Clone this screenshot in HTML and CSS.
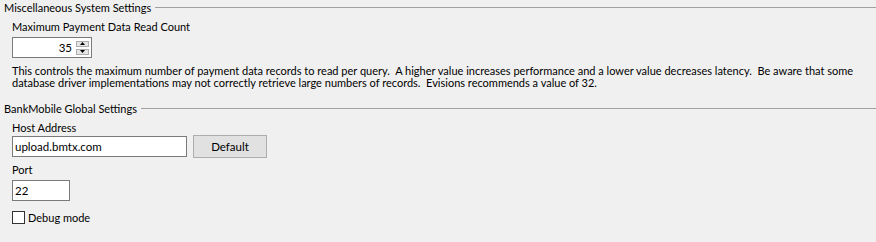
FILE: index.html
```html
<!DOCTYPE html>
<html>
<head>
<meta charset="utf-8">
<link rel="stylesheet" href="styles.css">
</head>
<body>
<section class="group">
  <div class="legend"><span class="legend-text">Miscellaneous System Settings</span><span class="legend-line"></span></div>
  <div class="content">
    <div class="label label-first">Maximum Payment Data Read Count</div>
    <div class="spinner">
      <span class="spin-value">35</span>
      <span class="spin-buttons">
        <span class="spin-btn"><svg width="7" height="4" viewBox="0 0 7 4"><path d="M3.5 0 L7 4 L0 4 Z" fill="#000"/></svg></span>
        <span class="spin-btn"><svg width="7" height="4" viewBox="0 0 7 4"><path d="M0 0 L7 0 L3.5 4 Z" fill="#000"/></svg></span>
      </span>
    </div>
    <p class="desc">This controls the maximum number of payment data records to read per query.&nbsp; A higher value increases performance and a lower value decreases latency.&nbsp; Be aware that some<br>database driver implementations may not correctly retrieve large numbers of records.&nbsp; Evisions recommends a value of 32.</p>
  </div>
</section>
<section class="group group-second">
  <div class="legend"><span class="legend-text">BankMobile Global Settings</span><span class="legend-line"></span></div>
  <div class="content">
    <div class="label label-first">Host Address</div>
    <div class="row">
      <div class="textbox host">upload.bmtx.com</div>
      <button class="button">Default</button>
    </div>
    <div class="label label-port">Port</div>
    <div class="textbox port">22</div>
    <label class="check"><span class="checkbox"></span><span>Debug mode</span></label>
  </div>
</section>
</body>
</html>
```
FILE: styles.css
```css
html, body {
  margin: 0;
  padding: 0;
}
body {
  width: 876px;
  height: 242px;
  overflow: hidden;
  background: #f0f0f0;
  color: #000;
  font-family: Lato, "Liberation Sans", sans-serif;
  font-size: 11px;
  line-height: 13px;
}
.group {
  padding-top: 1px;
}
.group-second {
  padding-top: 13px;
}
.legend {
  display: flex;
  align-items: center;
  height: 13px;
  padding-left: 4px;
}
.legend-text {
  white-space: nowrap;
}
.legend-line {
  flex: 1;
  height: 0;
  border-top: 1px solid #a0a0a0;
  margin-left: 4px;
}
.content {
  padding-left: 12px;
}
.label {
  height: 13px;
}
.label-first {
  margin-top: 6px;
}
.spinner {
  margin-top: 4px;
  width: 78px;
  height: 19px;
  border: 1px solid #7a7a7a;
  background: #fff;
  display: flex;
  align-items: center;
  justify-content: flex-end;
  box-sizing: content-box;
}
.spin-value {
  margin-right: 4px;
  font-size: 11.5px;
}
.spin-buttons {
  display: flex;
  flex-direction: column;
  gap: 2px;
  margin-right: 2px;
}
.spin-btn {
  width: 11px;
  height: 4px;
  border: 1px solid #adadad;
  background: #e5e5e5;
  display: flex;
  align-items: center;
  justify-content: center;
}
.spin-btn svg {
  display: block;
  width: 5px;
  height: 3px;
}
.desc {
  margin: 7px 0 0 0;
  white-space: nowrap;
  line-height: 12px;
}
.row {
  display: flex;
  align-items: center;
  gap: 6px;
  margin-top: 1px;
}
.textbox {
  border: 1px solid #7a7a7a;
  background: #fff;
  height: 19px;
  line-height: 19px;
  padding-left: 2px;
  font-size: 11.5px;
}
.host {
  width: 171px;
}
.port {
  width: 54px;
  margin-top: 4px;
}
.label-port {
  margin-top: 5px;
}
.button {
  width: 74px;
  height: 23px;
  border: 1px solid #adadad;
  background: #e1e1e1;
  font: inherit;
  font-size: 11.5px;
  color: #000;
  padding: 0;
  margin: 0;
}
.check {
  display: flex;
  align-items: center;
  gap: 3px;
  margin-top: 10px;
}
.checkbox {
  width: 11px;
  height: 11px;
  border: 1px solid #333;
  background: #fff;
}
```
